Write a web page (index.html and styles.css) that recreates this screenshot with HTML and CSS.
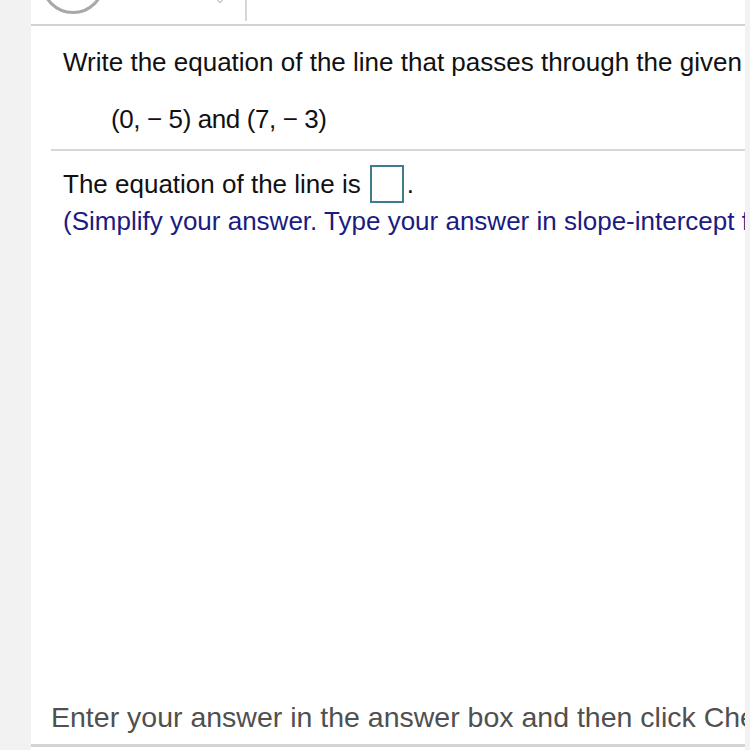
FILE: index.html
```html
<!DOCTYPE html>
<html>
<head>
<meta charset="utf-8">
<link rel="stylesheet" href="styles.css">
</head>
<body>
<div class="page">
  <div class="main">
    <div class="topbar">
      <div class="logo-slot">
        <div class="circle"></div>
        <span class="caret"></span>
      </div>
      <div class="divider"></div>
    </div>
    <div class="question">
      <p class="prompt">Write the equation of the line that passes through the given points.</p>
      <p class="points">(0, &minus; 5) and (7, &minus; 3)</p>
    </div>
    <div class="answer">
      <p class="eq">The equation of the line is <span class="box"></span>.</p>
      <p class="hint">(Simplify your answer. Type your answer in slope-intercept form.)</p>
    </div>
    <div class="spacer"></div>
    <div class="footer">
      <p class="footnote">Enter your answer in the answer box and then click Check Answer.</p>
    </div>
  </div>
</div>
</body>
</html>
```
FILE: styles.css
```css
html, body {
  margin: 0;
  padding: 0;
  background: #f2f2f2;
}
.page {
  width: 750px;
  height: 750px;
  display: flex;
  overflow: hidden;
  font-family: "Liberation Sans", Arial, sans-serif;
}
.main {
  margin-left: 31px;
  width: 714px;
  background: #ffffff;
  display: flex;
  flex-direction: column;
  overflow: hidden;
}
.topbar {
  height: 24px;
  border-bottom: 2px solid #d2d2d6;
  display: flex;
  flex-shrink: 0;
}
.logo-slot {
  width: 214px;
  position: relative;
  overflow: hidden;
}
.circle {
  position: absolute;
  left: 10px;
  top: -50px;
  width: 58px;
  height: 58px;
  border: 3px solid #a8a8a8;
  border-radius: 50%;
}
.caret {
  position: absolute;
  left: 186px;
  top: -4px;
  width: 5px;
  height: 5px;
  border-right: 1px solid #bbb;
  border-bottom: 1px solid #bbb;
  transform: rotate(45deg);
}
.divider {
  width: 2px;
  height: 21px;
  background: #d6d6d6;
}
p {
  margin: 0;
  white-space: nowrap;
}
.question {
  padding: 21px 0 15px 12px;
  border-bottom: 2px solid #d7d7d7;
  margin-left: 20px;
}
.prompt {
  font-size: 26px;
  line-height: 30px;
  color: #111;
}
.points {
  font-size: 26px;
  line-height: 30px;
  color: #111;
  margin-top: 27px;
  padding-left: 48px;
  letter-spacing: -0.4px;
}
.answer {
  padding: 14px 0 0 32px;
}
.eq {
  font-size: 26px;
  line-height: 38px;
  color: #111;
  display: flex;
  align-items: center;
}
.box {
  display: inline-block;
  box-sizing: border-box;
  width: 34px;
  height: 38px;
  border: 2px solid #3f7c8c;
  margin: 0 3px 0 9px;
}
.hint {
  font-size: 26px;
  line-height: 30px;
  margin-top: 3px;
  color: #1b1b80;
}
.spacer {
  flex: 1;
}
.footer {
  padding: 0 0 12px 20px;
  border-bottom: 3px solid #d4d4d4;
  margin-bottom: 3px;
}
.footnote {
  font-size: 28.5px;
  line-height: 30px;
  color: #505050;
}
```
